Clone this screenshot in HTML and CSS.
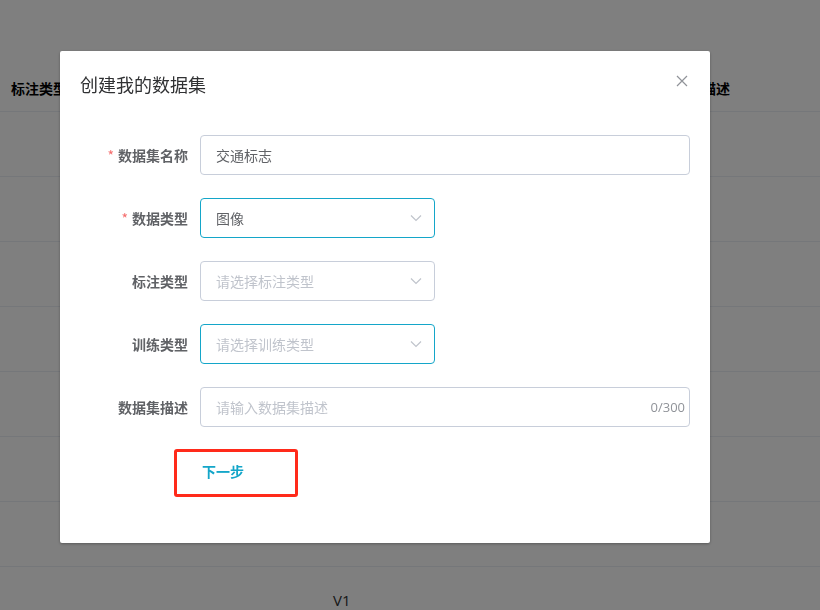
FILE: index.html
```html
<!DOCTYPE html>
<html lang="zh-CN">
<head>
<meta charset="utf-8">
<link rel="stylesheet" href="styles.css">
</head>
<body>
<div class="page">
  <div class="table">
    <div class="row head">
      <div class="cell c1">标注类型</div>
      <div class="cell c2"></div>
      <div class="cell c3">数据集描述</div>
    </div>
    <div class="row"></div>
    <div class="row"></div>
    <div class="row"></div>
    <div class="row"></div>
    <div class="row"></div>
    <div class="row"></div>
    <div class="row"></div>
    <div class="row last">
      <div class="cell c1"></div>
      <div class="cell c2">V1</div>
      <div class="cell c3"></div>
    </div>
  </div>
</div>

<div class="overlay">
  <div class="dialog">
    <div class="dialog-header">
      <span class="dialog-title">创建我的数据集</span>
      <button class="close" aria-label="关闭">
        <svg width="12" height="12" viewBox="0 0 12 12"><path d="M1 1L11 11M11 1L1 11" stroke="#909399" stroke-width="1.2" fill="none"/></svg>
      </button>
    </div>
    <div class="dialog-body">
      <div class="form-item">
        <label class="label"><span class="req">*</span>数据集名称</label>
        <div class="content">
          <div class="input wide"><span class="value">交通标志</span></div>
        </div>
      </div>
      <div class="form-item">
        <label class="label"><span class="req">*</span>数据类型</label>
        <div class="content">
          <div class="input select focus"><span class="value">图像</span>
            <svg class="arrow" width="12" height="8" viewBox="0 0 12 8"><path d="M1 1.5L6 6.5L11 1.5" stroke="#c0c4cc" stroke-width="1.2" fill="none"/></svg>
          </div>
        </div>
      </div>
      <div class="form-item">
        <label class="label">标注类型</label>
        <div class="content">
          <div class="input select"><span class="placeholder">请选择标注类型</span>
            <svg class="arrow" width="12" height="8" viewBox="0 0 12 8"><path d="M1 1.5L6 6.5L11 1.5" stroke="#c0c4cc" stroke-width="1.2" fill="none"/></svg>
          </div>
        </div>
      </div>
      <div class="form-item">
        <label class="label">训练类型</label>
        <div class="content">
          <div class="input select focus"><span class="placeholder">请选择训练类型</span>
            <svg class="arrow" width="12" height="8" viewBox="0 0 12 8"><path d="M1 1.5L6 6.5L11 1.5" stroke="#c0c4cc" stroke-width="1.2" fill="none"/></svg>
          </div>
        </div>
      </div>
      <div class="form-item">
        <label class="label">数据集描述</label>
        <div class="content">
          <div class="input wide"><span class="placeholder">请输入数据集描述</span><span class="count">0/300</span></div>
        </div>
      </div>
      <div class="form-item btn-item">
        <label class="label"></label>
        <div class="content">
          <div class="btn-wrap">
            <button class="text-btn">下一步</button>
            <span class="mark"></span>
          </div>
        </div>
      </div>
    </div>
  </div>
</div>
</body>
</html>
```

FILE: styles.css
```css
* { box-sizing: border-box; }
html, body { margin: 0; padding: 0; }
body {
  width: 820px;
  height: 610px;
  overflow: hidden;
  background: #fff;
  font-family: "Noto Sans CJK SC", "Noto Sans", sans-serif;
  font-size: 14px;
  color: #303133;
}
.page { padding-top: 64px; }
.table { display: flex; flex-direction: column; }
.row {
  height: 65px;
  border-bottom: 1px solid #ebeef5;
  display: grid;
  grid-template-columns: 300px 300px 220px;
  align-items: center;
}
.row.head { height: 48px; font-weight: 700; color: #000; }
.row.last { border-bottom: none; height: 64px; }
.cell.c1 { padding-left: 11px; }
.cell.c2 { padding-left: 33px; font-family: "Open Sans", "Noto Sans", sans-serif; font-size: 15px; color: #303133; padding-top: 1px; }
.head .cell.c3 { padding-left: 60px; }

.overlay {
  position: fixed;
  inset: 0;
  background: rgba(0, 0, 0, 0.5);
  padding: 51px 0 0 60px;
}
.dialog {
  width: 650px;
  height: 492px;
  background: #fff;
  border-radius: 2px;
  box-shadow: 0 1px 3px rgba(0, 0, 0, 0.3);
}
.dialog-header {
  padding: 21px 22px 9px 20px;
  display: flex;
  justify-content: space-between;
  align-items: flex-start;
}
.dialog-title {
  font-size: 18px;
  line-height: 24px;
  color: #303133;
}
.close {
  border: none;
  background: none;
  padding: 0;
  margin-top: 3px;
  width: 12px;
  height: 12px;
  display: flex;
}
.dialog-body { padding: 30px 20px 0 20px; }
.form-item {
  display: flex;
  align-items: center;
  margin-bottom: 23px;
  height: 40px;
}
.label {
  width: 120px;
  flex: none;
  text-align: right;
  padding-right: 12px;
  font-weight: 700;
  color: #606266;
  font-size: 14px;
}
.req { color: #f56c6c; margin-right: 4px; font-weight: 400; }
.content { flex: 1; display: flex; }
.input {
  height: 40px;
  border: 1px solid #c8ceda;
  border-radius: 4px;
  display: flex;
  align-items: center;
  padding: 0 15px;
  color: #606266;
}
.input.wide { width: 490px; }
.input.select { width: 235px; justify-content: space-between; padding-right: 12px; }
.input.focus { border-color: #14a6c9; }
.placeholder { color: #c0c4cc; }
.count {
  margin-left: auto;
  margin-right: -11px;
  font-family: "Open Sans", "Noto Sans", sans-serif;
  font-size: 13px;
  color: #909399;
}
.arrow { flex: none; }
.btn-item { margin-top: -1px; margin-bottom: 0; height: 48px; }
.btn-wrap { position: relative; height: 48px; display: flex; align-items: center; }
.text-btn {
  border: none;
  background: none;
  padding: 0 2px;
  font-family: "Noto Sans CJK SC", sans-serif;
  font-size: 14px;
  font-weight: 700;
  color: #14a6c9;
  margin-top: -4px;
}
.mark {
  position: absolute;
  left: -26px;
  top: 0;
  width: 124px;
  height: 48px;
  border: 3px solid #ff2a1a;
  border-radius: 3px;
}
```
